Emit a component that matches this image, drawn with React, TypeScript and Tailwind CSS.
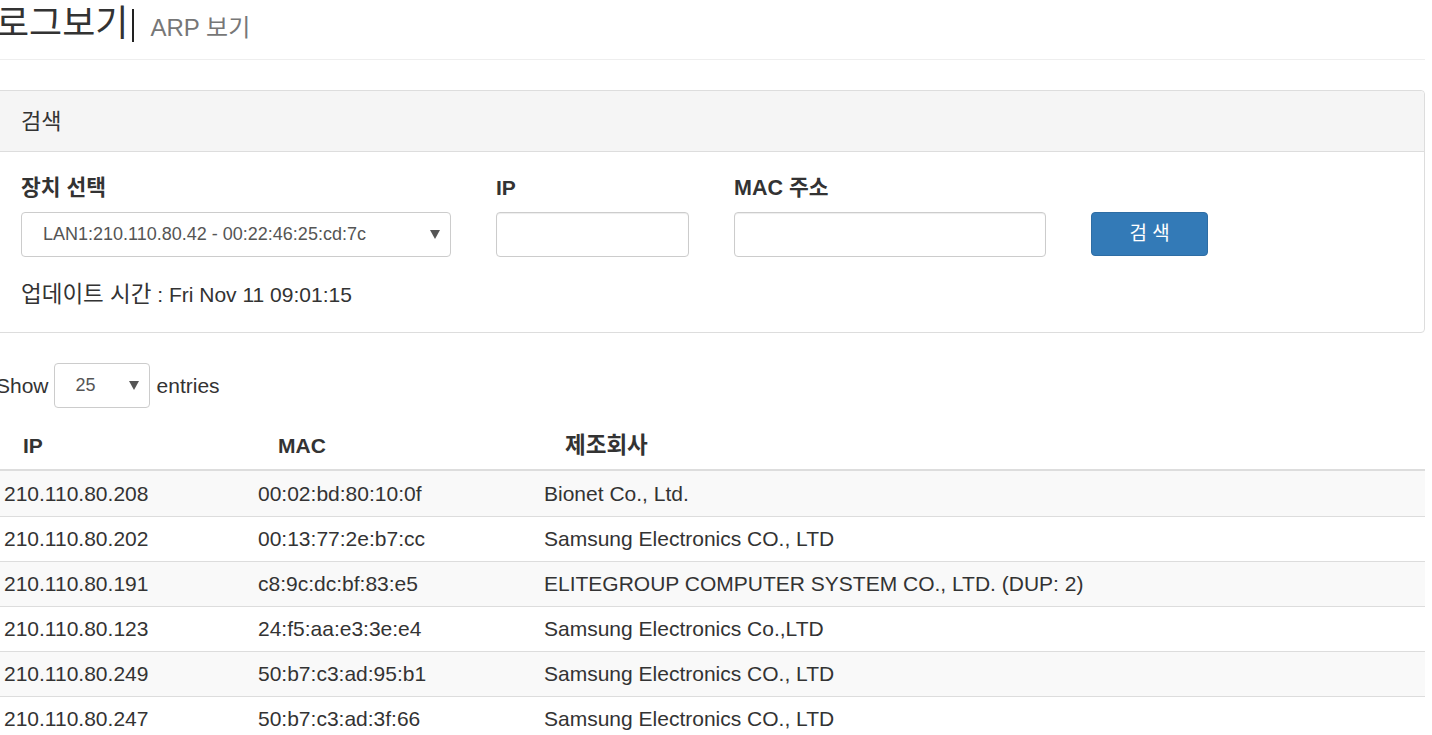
import React from "react";

const rows = [
  ["210.110.80.208", "00:02:bd:80:10:0f", "Bionet Co., Ltd."],
  ["210.110.80.202", "00:13:77:2e:b7:cc", "Samsung Electronics CO., LTD"],
  ["210.110.80.191", "c8:9c:dc:bf:83:e5", "ELITEGROUP COMPUTER SYSTEM CO., LTD. (DUP: 2)"],
  ["210.110.80.123", "24:f5:aa:e3:3e:e4", "Samsung Electronics Co.,LTD"],
  ["210.110.80.249", "50:b7:c3:ad:95:b1", "Samsung Electronics CO., LTD"],
  ["210.110.80.247", "50:b7:c3:ad:3f:66", "Samsung Electronics CO., LTD"],
];

function Caret() {
  return (
    <svg width="10" height="9" viewBox="0 0 10 9" className="shrink-0">
      <path d="M0 0 L10 0 L5 9 Z" fill="#555" />
    </svg>
  );
}

export default function App() {
  return (
    <div
      className="w-[1429px] -ml-1 text-[#333] bg-white h-[735px] overflow-hidden"
      style={{ fontFamily: '"Liberation Sans", Arial, "Noto Sans CJK KR", sans-serif' }}
    >
      {/* Page header */}
      <div className="h-[60px] border-b border-[#eee] flex items-end pb-[18px]">
        <span className="text-[36px] leading-[36px] text-[#333] whitespace-nowrap mb-[-1px]">로그보기</span>
        <span className="w-[2px] h-[33px] bg-[#222] ml-[4px] mb-[-1px]" />
        <span className="text-[24px] leading-[24px] text-[#777] ml-[16px] mb-[1px] whitespace-nowrap">ARP 보기</span>
      </div>

      {/* Panel */}
      <div className="mt-[30px] border border-[#ddd] rounded-[4px]">
        <div className="h-[61px] bg-[#f5f5f5] border-b border-[#ddd] px-[24px] flex items-center text-[22px] rounded-t-[4px]">
          검색
        </div>
        <div className="px-[24px] pt-[24px] pb-[25px]">
          <div className="flex items-end">
            <div className="w-[430px]">
              <div className="text-[21.5px] leading-[24px] font-bold">장치 선택</div>
              <div className="mt-[12px] h-[45px] border border-[#ccc] rounded-[4px] flex items-center pl-[21px] pr-[10px] text-[18px] text-[#555]">
                <span className="flex-1 whitespace-nowrap">LAN1:210.110.80.42 - 00:22:46:25:cd:7c</span>
                <Caret />
              </div>
            </div>
            <div className="w-[193px] ml-[45px]">
              <div className="text-[21px] leading-[24px] font-bold">IP</div>
              <div className="mt-[12px] h-[45px] border border-[#ccc] rounded-[4px] shadow-[inset_0_1px_1px_rgba(0,0,0,0.075)]" />
            </div>
            <div className="w-[312px] ml-[45px]">
              <div className="text-[21.5px] leading-[24px] font-bold whitespace-nowrap">MAC 주소</div>
              <div className="mt-[12px] h-[45px] border border-[#ccc] rounded-[4px] shadow-[inset_0_1px_1px_rgba(0,0,0,0.075)]" />
            </div>
            <button className="ml-[45px] w-[117px] h-[44px] mb-[1px] bg-[#337ab7] border border-[#2e6da4] rounded-[4px] text-white text-[19px]">
              검 색
            </button>
          </div>
          <div className="mt-[26px] text-[21px] leading-[24px] whitespace-nowrap">
            <span className="text-[22.5px]">업데이트 시간</span> : Fri Nov 11 09:01:15
          </div>
        </div>
      </div>

      {/* Show entries */}
      <div className="mt-[30px] flex items-center h-[45px] text-[21px]">
        <span>Show</span>
        <div className="ml-[5px] w-[96px] h-[45px] border border-[#ccc] rounded-[4px] flex items-center pl-[21px] pr-[10px] text-[18px] text-[#555]">
          <span className="flex-1">25</span>
          <Caret />
        </div>
        <span className="ml-[7px]">entries</span>
      </div>

      {/* Table */}
      <div className="mt-[15px] text-[21px]">
        <div className="grid grid-cols-[254px_286px_1fr] h-[48px] border-b-2 border-[#ddd] font-bold items-center">
          <div className="pl-[27px]">IP</div>
          <div className="pl-[28px]">MAC</div>
          <div className="pl-[29px] text-[22.5px]">제조회사</div>
        </div>
        {rows.map((r, i) => (
          <div
            key={i}
            className={
              "grid grid-cols-[254px_286px_1fr] h-[45px] items-center " +
              (i > 0 ? "border-t border-[#ddd] " : "") +
              (i % 2 === 0 ? "bg-[#f9f9f9]" : "bg-white")
            }
          >
            <div className="pl-[8px] whitespace-nowrap">{r[0]}</div>
            <div className="pl-[8px] whitespace-nowrap">{r[1]}</div>
            <div className="pl-[8px] whitespace-nowrap">{r[2]}</div>
          </div>
        ))}
      </div>
    </div>
  );
}
